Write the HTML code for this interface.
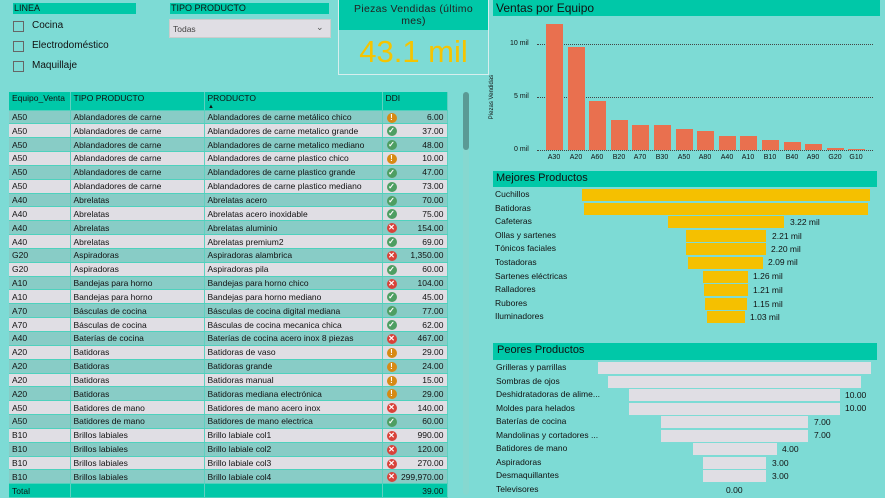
<!DOCTYPE html>
<html><head><meta charset="utf-8">
<style>
*{margin:0;padding:0;box-sizing:border-box}
body{width:885px;height:498px;background:#7DDBD5;font-family:"Liberation Sans",sans-serif;font-size:9px;color:#111;position:relative;overflow:hidden}
.a{position:absolute}
.hd{position:absolute;background:#00C8A8}
table{position:absolute;left:9px;top:92px;width:438px;border-collapse:collapse;table-layout:fixed}
tr{height:13.85px}
tr.h{height:18px}
td,th{padding:0 3px;white-space:nowrap;overflow:hidden;font-weight:normal;text-align:left;font-size:8.5px;line-height:10px;border-right:1px solid #5fd0c0;border-bottom:1px solid #4fd1bd}
th{background:#00C8A8;vertical-align:top;padding-top:1px}
tr:nth-child(odd) td{background:#E0DEE4}
tr:nth-child(even) td{background:#88CCC6}
td:last-child{text-align:right;position:relative}
.i{position:absolute;left:4px;top:2px;width:10px;height:10px;border-radius:50%;color:#fff;font-size:8px;line-height:10px;text-align:center;font-weight:bold}
.w{background:#D78A14}.g{background:#4E9E62}.r{background:#D9423A}
.lbl{position:absolute;font-size:8.5px;white-space:nowrap}
.bar{position:absolute;height:12px}
.y{background:#F5C000}.p{background:#E0DEE4}
.o{position:absolute;background:#E9704F;width:17px}
.xl{position:absolute;top:154px;font-size:7px;width:22px;text-align:center}
.grid{position:absolute;left:537px;width:336px;border-top:1px dotted #444}
</style></head><body>
<div class="hd" style="left:13px;top:3px;width:123px;height:11px"></div>
<div class="lbl" style="left:14px;top:3px;font-size:9px">LINEA</div>
<div class="a" style="left:13px;top:21px;width:11px;height:11px;border:1px solid #666"></div>
<div class="lbl" style="left:32px;top:20px;font-size:10px">Cocina</div>
<div class="a" style="left:13px;top:41px;width:11px;height:11px;border:1px solid #666"></div>
<div class="lbl" style="left:32px;top:40px;font-size:10px">Electrodoméstico</div>
<div class="a" style="left:13px;top:61px;width:11px;height:11px;border:1px solid #666"></div>
<div class="lbl" style="left:32px;top:60px;font-size:10px">Maquillaje</div>
<div class="hd" style="left:170px;top:3px;width:159px;height:11px"></div>
<div class="lbl" style="left:171px;top:3px;font-size:9px">TIPO PRODUCTO</div>
<div class="a" style="left:169px;top:19px;width:162px;height:19px;background:#E0DEE4;border:1px solid #ccc"></div>
<div class="lbl" style="left:173px;top:24px;color:#444">Todas</div>
<div class="lbl" style="left:316px;top:22px;color:#555;font-size:9px">&#8964;</div>
<div class="a" style="left:338px;top:0;width:151px;height:75px;border:1px solid #d8eeee;background:#7DDBD5"></div>
<div class="hd" style="left:339px;top:0;width:149px;height:30px"></div>
<div class="lbl" style="left:349px;top:3px;width:129px;text-align:center;font-size:10.5px;white-space:normal;line-height:12px;color:#222;letter-spacing:0.3px">Piezas Vendidas (último mes)</div>
<div class="lbl" style="left:339px;top:34px;width:149px;text-align:center;font-size:31px;color:#F5C400">43.1 mil</div>

<table>
<colgroup><col style="width:61px"><col style="width:134px"><col style="width:178px"><col style="width:65px"></colgroup>
<tr class="h"><th>Equipo_Venta</th><th>TIPO PRODUCTO</th><th>PRODUCTO<span style="position:absolute;left:199px;top:10px;font-size:6px">▲</span></th><th>DDI</th></tr>
<tr><td>A50</td><td>Ablandadores de carne</td><td>Ablandadores de carne metálico chico</td><td><span class="i w">!</span>6.00</td></tr>
<tr><td>A50</td><td>Ablandadores de carne</td><td>Ablandadores de carne metalico grande</td><td><span class="i g">✓</span>37.00</td></tr>
<tr><td>A50</td><td>Ablandadores de carne</td><td>Ablandadores de carne metalico mediano</td><td><span class="i g">✓</span>48.00</td></tr>
<tr><td>A50</td><td>Ablandadores de carne</td><td>Ablandadores de carne plastico chico</td><td><span class="i w">!</span>10.00</td></tr>
<tr><td>A50</td><td>Ablandadores de carne</td><td>Ablandadores de carne plastico grande</td><td><span class="i g">✓</span>47.00</td></tr>
<tr><td>A50</td><td>Ablandadores de carne</td><td>Ablandadores de carne plastico mediano</td><td><span class="i g">✓</span>73.00</td></tr>
<tr><td>A40</td><td>Abrelatas</td><td>Abrelatas acero</td><td><span class="i g">✓</span>70.00</td></tr>
<tr><td>A40</td><td>Abrelatas</td><td>Abrelatas acero inoxidable</td><td><span class="i g">✓</span>75.00</td></tr>
<tr><td>A40</td><td>Abrelatas</td><td>Abrelatas aluminio</td><td><span class="i r">✕</span>154.00</td></tr>
<tr><td>A40</td><td>Abrelatas</td><td>Abrelatas premium2</td><td><span class="i g">✓</span>69.00</td></tr>
<tr><td>G20</td><td>Aspiradoras</td><td>Aspiradoras alambrica</td><td><span class="i r">✕</span>1,350.00</td></tr>
<tr><td>G20</td><td>Aspiradoras</td><td>Aspiradoras pila</td><td><span class="i g">✓</span>60.00</td></tr>
<tr><td>A10</td><td>Bandejas para horno</td><td>Bandejas para horno chico</td><td><span class="i r">✕</span>104.00</td></tr>
<tr><td>A10</td><td>Bandejas para horno</td><td>Bandejas para horno mediano</td><td><span class="i g">✓</span>45.00</td></tr>
<tr><td>A70</td><td>Básculas de cocina</td><td>Básculas de cocina digital mediana</td><td><span class="i g">✓</span>77.00</td></tr>
<tr><td>A70</td><td>Básculas de cocina</td><td>Básculas de cocina mecanica chica</td><td><span class="i g">✓</span>62.00</td></tr>
<tr><td>A40</td><td>Baterías de cocina</td><td>Baterías de cocina acero inox 8 piezas</td><td><span class="i r">✕</span>467.00</td></tr>
<tr><td>A20</td><td>Batidoras</td><td>Batidoras de vaso</td><td><span class="i w">!</span>29.00</td></tr>
<tr><td>A20</td><td>Batidoras</td><td>Batidoras grande</td><td><span class="i w">!</span>24.00</td></tr>
<tr><td>A20</td><td>Batidoras</td><td>Batidoras manual</td><td><span class="i w">!</span>15.00</td></tr>
<tr><td>A20</td><td>Batidoras</td><td>Batidoras mediana electrónica</td><td><span class="i w">!</span>29.00</td></tr>
<tr><td>A50</td><td>Batidores de mano</td><td>Batidores de mano acero inox</td><td><span class="i r">✕</span>140.00</td></tr>
<tr><td>A50</td><td>Batidores de mano</td><td>Batidores de mano electrica</td><td><span class="i g">✓</span>60.00</td></tr>
<tr><td>B10</td><td>Brillos labiales</td><td>Brillo labiale col1</td><td><span class="i r">✕</span>990.00</td></tr>
<tr><td>B10</td><td>Brillos labiales</td><td>Brillo labiale col2</td><td><span class="i r">✕</span>120.00</td></tr>
<tr><td>B10</td><td>Brillos labiales</td><td>Brillo labiale col3</td><td><span class="i r">✕</span>270.00</td></tr>
<tr><td>B10</td><td>Brillos labiales</td><td>Brillo labiale col4</td><td><span class="i r">✕</span>299,970.00</td></tr>
<tr><td style="background:#00C8A8">Total</td><td style="background:#00C8A8"></td><td style="background:#00C8A8"></td><td style="background:#00C8A8">39.00</td></tr>
</table>
<div class="a" style="left:463px;top:92px;width:6px;height:403px;background:#86d8d0;border-radius:3px"></div>
<div class="a" style="left:463px;top:92px;width:6px;height:58px;background:#5a9a95;border-radius:3px"></div>

<div class="hd" style="left:493px;top:0;width:387px;height:16px"></div>
<div class="lbl" style="left:496px;top:1px;font-size:12px">Ventas por Equipo</div>
<div class="grid" style="top:44px"></div><div class="grid" style="top:97px"></div><div class="grid" style="top:150px"></div>
<div class="lbl" style="left:510px;top:40px;font-size:7px">10 mil</div>
<div class="lbl" style="left:514px;top:93px;font-size:7px">5 mil</div>
<div class="lbl" style="left:514px;top:146px;font-size:7px">0 mil</div>
<div class="lbl" style="left:470px;top:94px;font-size:6px;transform:rotate(-90deg)">Piezas Vendidas</div>
<div class="o" style="left:546px;top:24px;height:126px"></div>
<div class="o" style="left:568px;top:47px;height:103px"></div>
<div class="o" style="left:589px;top:101px;height:49px"></div>
<div class="o" style="left:611px;top:120px;height:30px"></div>
<div class="o" style="left:632px;top:125px;height:25px"></div>
<div class="o" style="left:654px;top:125px;height:25px"></div>
<div class="o" style="left:676px;top:129px;height:21px"></div>
<div class="o" style="left:697px;top:131px;height:19px"></div>
<div class="o" style="left:719px;top:136px;height:14px"></div>
<div class="o" style="left:740px;top:136px;height:14px"></div>
<div class="o" style="left:762px;top:140px;height:10px"></div>
<div class="o" style="left:784px;top:142px;height:8px"></div>
<div class="o" style="left:805px;top:144px;height:6px"></div>
<div class="o" style="left:827px;top:148px;height:2px"></div>
<div class="o" style="left:848px;top:149px;height:1px"></div>
<div class="xl" style="left:543px">A30</div><div class="xl" style="left:565px">A20</div><div class="xl" style="left:586px">A60</div><div class="xl" style="left:608px">B20</div><div class="xl" style="left:629px">A70</div><div class="xl" style="left:651px">B30</div><div class="xl" style="left:673px">A50</div><div class="xl" style="left:694px">A80</div><div class="xl" style="left:716px">A40</div><div class="xl" style="left:737px">A10</div><div class="xl" style="left:759px">B10</div><div class="xl" style="left:781px">B40</div><div class="xl" style="left:802px">A90</div><div class="xl" style="left:824px">G20</div><div class="xl" style="left:845px">G10</div>

<div class="hd" style="left:493px;top:171px;width:384px;height:16px"></div>
<div class="lbl" style="left:496px;top:172px;font-size:11px">Mejores Productos</div>
<div class="lbl" style="left:495px;top:189px">Cuchillos</div><div class="bar y" style="left:582px;top:189px;width:288px"></div>
<div class="lbl" style="left:495px;top:203px">Batidoras</div><div class="bar y" style="left:584px;top:203px;width:284px"></div>
<div class="lbl" style="left:495px;top:216px">Cafeteras</div><div class="bar y" style="left:668px;top:216px;width:116px"></div><div class="lbl" style="left:790px;top:217px">3.22 mil</div>
<div class="lbl" style="left:495px;top:230px">Ollas y sartenes</div><div class="bar y" style="left:686px;top:230px;width:80px"></div><div class="lbl" style="left:772px;top:231px">2.21 mil</div>
<div class="lbl" style="left:495px;top:243px">Tónicos faciales</div><div class="bar y" style="left:686px;top:243px;width:80px"></div><div class="lbl" style="left:771px;top:244px">2.20 mil</div>
<div class="lbl" style="left:495px;top:257px">Tostadoras</div><div class="bar y" style="left:688px;top:257px;width:75px"></div><div class="lbl" style="left:768px;top:257px">2.09 mil</div>
<div class="lbl" style="left:495px;top:271px">Sartenes eléctricas</div><div class="bar y" style="left:703px;top:271px;width:45px"></div><div class="lbl" style="left:753px;top:271px">1.26 mil</div>
<div class="lbl" style="left:495px;top:284px">Ralladores</div><div class="bar y" style="left:704px;top:284px;width:44px"></div><div class="lbl" style="left:753px;top:285px">1.21 mil</div>
<div class="lbl" style="left:495px;top:298px">Rubores</div><div class="bar y" style="left:705px;top:298px;width:42px"></div><div class="lbl" style="left:753px;top:299px">1.15 mil</div>
<div class="lbl" style="left:495px;top:311px">Iluminadores</div><div class="bar y" style="left:707px;top:311px;width:38px"></div><div class="lbl" style="left:750px;top:312px">1.03 mil</div>

<div class="hd" style="left:493px;top:343px;width:384px;height:17px"></div>
<div class="lbl" style="left:497px;top:344px;font-size:11px">Peores Productos</div>
<div class="lbl" style="left:496px;top:362px">Grilleras y parrillas</div><div class="bar p" style="left:598px;top:362px;width:273px"></div>
<div class="lbl" style="left:496px;top:376px">Sombras de ojos</div><div class="bar p" style="left:608px;top:376px;width:253px"></div>
<div class="lbl" style="left:496px;top:389px">Deshidratadoras de alime...</div><div class="bar p" style="left:629px;top:389px;width:211px"></div><div class="lbl" style="left:845px;top:390px">10.00</div>
<div class="lbl" style="left:496px;top:403px">Moldes para helados</div><div class="bar p" style="left:629px;top:403px;width:211px"></div><div class="lbl" style="left:845px;top:403px">10.00</div>
<div class="lbl" style="left:496px;top:416px">Baterías de cocina</div><div class="bar p" style="left:661px;top:416px;width:147px"></div><div class="lbl" style="left:814px;top:417px">7.00</div>
<div class="lbl" style="left:496px;top:430px">Mandolinas y cortadores ...</div><div class="bar p" style="left:661px;top:430px;width:147px"></div><div class="lbl" style="left:814px;top:430px">7.00</div>
<div class="lbl" style="left:496px;top:443px">Batidores de mano</div><div class="bar p" style="left:693px;top:443px;width:84px"></div><div class="lbl" style="left:782px;top:444px">4.00</div>
<div class="lbl" style="left:496px;top:457px">Aspiradoras</div><div class="bar p" style="left:703px;top:457px;width:63px"></div><div class="lbl" style="left:772px;top:458px">3.00</div>
<div class="lbl" style="left:496px;top:470px">Desmaquillantes</div><div class="bar p" style="left:703px;top:470px;width:63px"></div><div class="lbl" style="left:772px;top:471px">3.00</div>
<div class="lbl" style="left:496px;top:484px">Televisores</div><div class="lbl" style="left:726px;top:485px">0.00</div>
</body></html>
